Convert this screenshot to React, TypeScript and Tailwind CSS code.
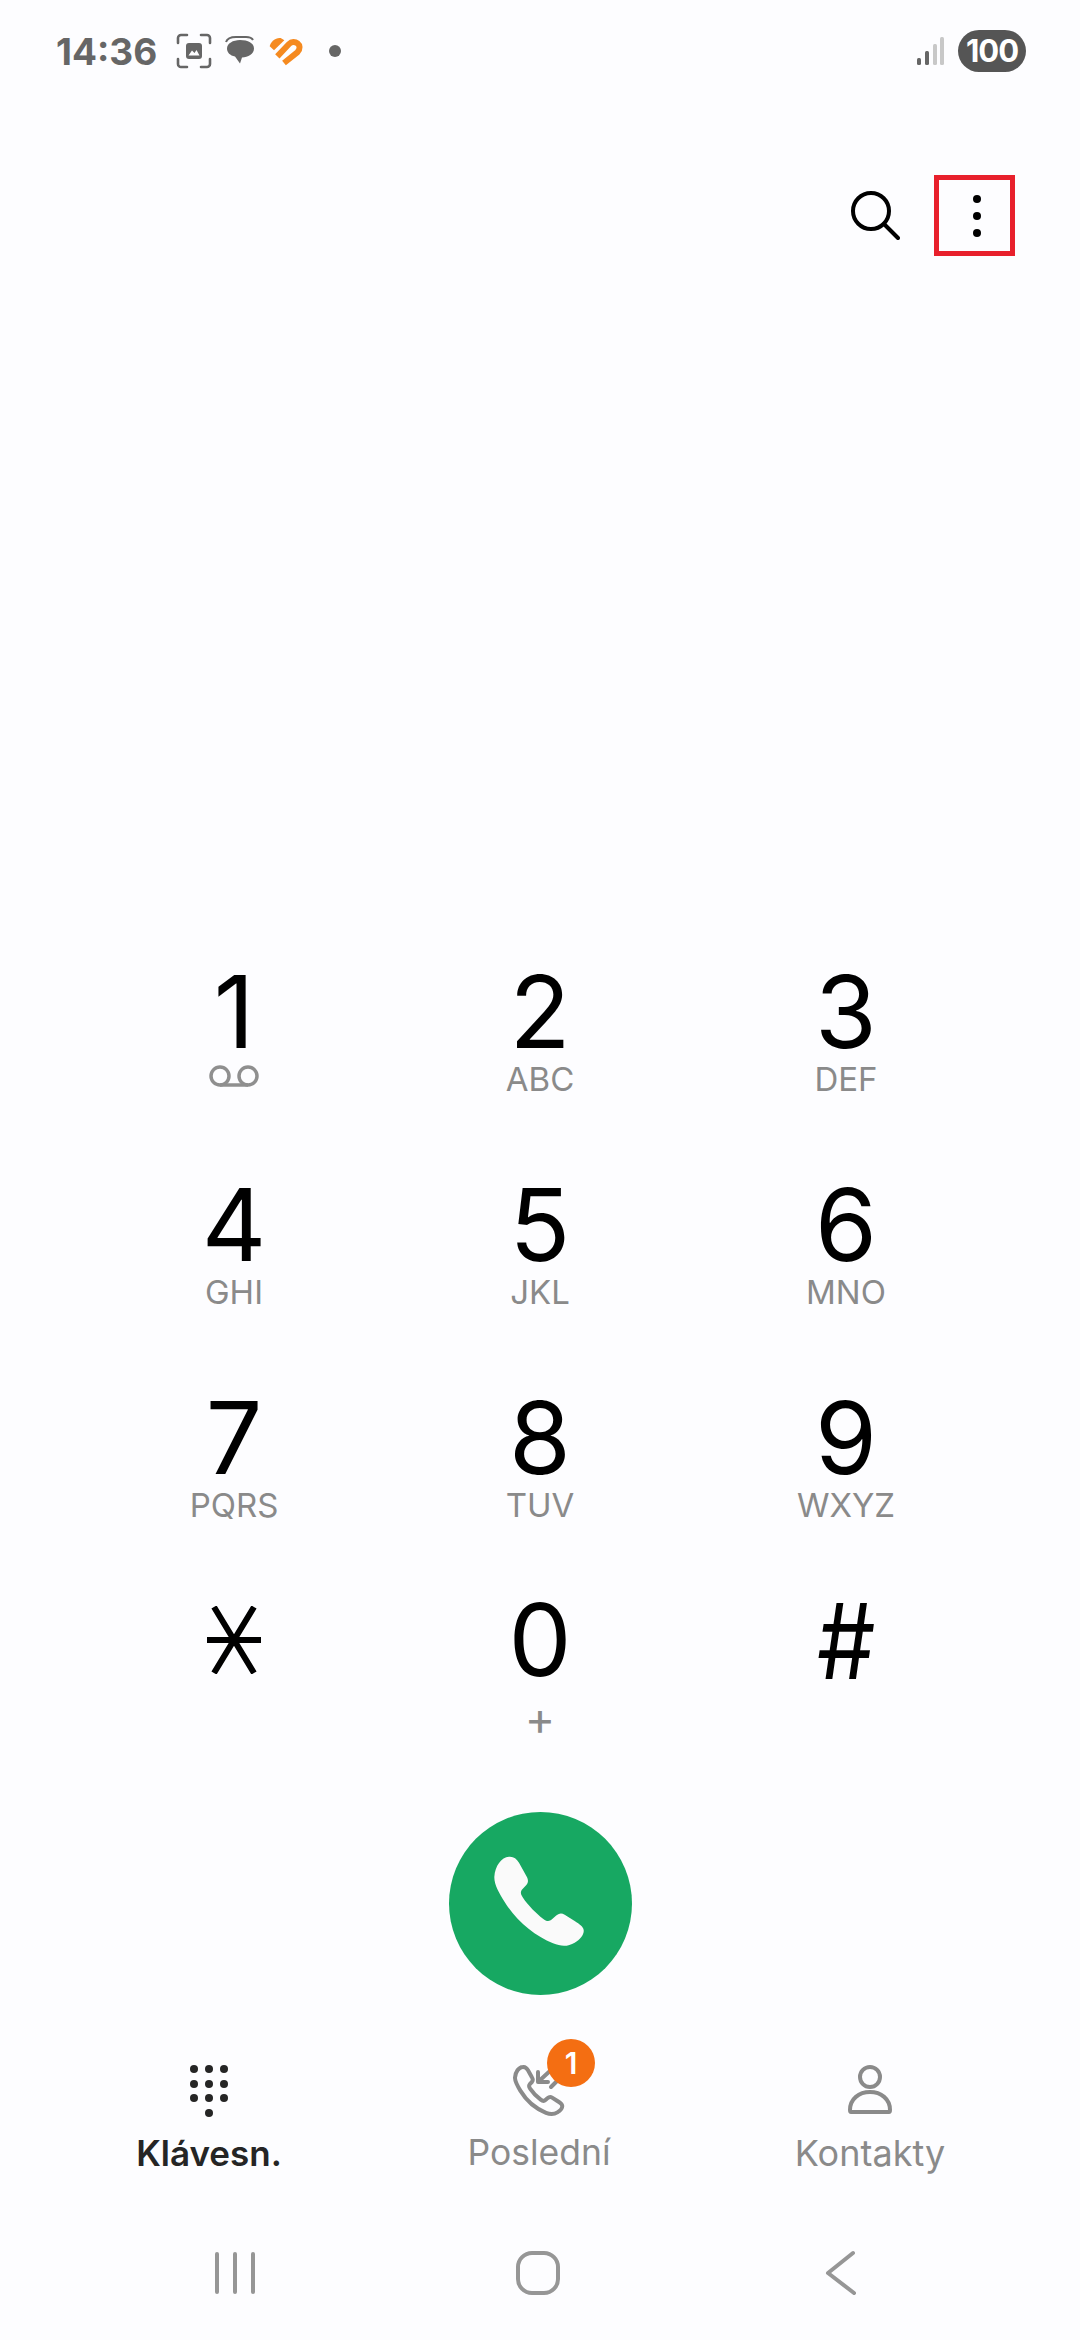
const keys = [
  { digit: '1', voicemail: true },
  { digit: '2', letters: 'ABC' },
  { digit: '3', letters: 'DEF' },
  { digit: '4', letters: 'GHI' },
  { digit: '5', letters: 'JKL' },
  { digit: '6', letters: 'MNO' },
  { digit: '7', letters: 'PQRS' },
  { digit: '8', letters: 'TUV' },
  { digit: '9', letters: 'WXYZ' },
];

function StatusBar() {
  return (
    <div className="flex items-center justify-between h-[102px] pl-[56px] pr-[54px]">
      <div className="flex items-center">
        <span className="text-[37px] leading-none font-bold text-[#666666] font-['Inter',sans-serif]">14:36</span>
        <svg className="ml-[19px]" width="36" height="36" viewBox="0 0 36 36" fill="none">
          <path d="M2 10V5a3 3 0 0 1 3-3h6M25 2h6a3 3 0 0 1 3 3v5M34 26v5a3 3 0 0 1-3 3h-6M11 34H5a3 3 0 0 1-3-3v-5" stroke="#666" strokeWidth="2.6" strokeLinecap="round" />
          <rect x="10" y="10" width="16" height="16" rx="3" fill="#666" />
          <path d="M12.500 22.500l3.500-5 2.500 2.500 2-3 3 5.500z" fill="#fdfdff" />
        </svg>
        <svg className="ml-[12px]" width="32" height="32" viewBox="0 0 32 32">
          <path d="M2 7c1-3 5-5 10-5h10c3 0 6 1 7 3" fill="none" stroke="#666" strokeWidth="2" />
          <path d="M16 5c8 0 14 3 14 8.500s-6 9-12 9l-2 6-5-7c-5-1-8-4-8-8 0-5 6-8.500 13-8.500z" fill="#666" />
        </svg>
        <svg className="ml-[13px]" width="35" height="29" viewBox="810 112 105 87" fill="none">
          <path d="M812 140C815 125 830 113 845 115L856 122L825 152Z" fill="#f58a20" />
          <path d="M835 170L870 133C885 118 915 135 895 158L855 190" stroke="#f58a20" strokeWidth="18" />
        </svg>
        <div className="ml-[25px] w-[12px] h-[12px] rounded-full bg-[#666666]" />
      </div>
      <div className="flex items-center">
        <svg width="28" height="30" viewBox="0 0 28 30">
          <rect x="1" y="22" width="4" height="7" rx="1.500" fill="#666" />
          <rect x="9" y="15" width="4" height="14" rx="1.500" fill="#666" />
          <rect x="17" y="8" width="4" height="21" rx="1.500" fill="#c8c8c8" />
          <rect x="24" y="1" width="4" height="28" rx="1.500" fill="#c8c8c8" />
        </svg>
        <div className="ml-[14px] w-[68px] h-[42px] rounded-full bg-[#555555] flex items-center justify-center text-white text-[31px] font-bold font-['Inter',sans-serif] tracking-[-1px]">
          100
        </div>
      </div>
    </div>
  );
}

function Toolbar() {
  return (
    <div className="flex items-center justify-end pr-[65px] mt-[73px]">
      <svg width="50" height="52" viewBox="0 0 50 52" fill="none" stroke="#000" strokeWidth="4" strokeLinecap="round">
        <circle cx="21" cy="21" r="18" />
        <path d="M34 34l14 14" />
      </svg>
      <div className="ml-[34px] w-[81px] h-[81px] border-[5px] border-[#e8202c] flex flex-col items-center justify-center gap-[9px] pl-[4px]">
        <div className="w-[8px] h-[8px] rounded-full bg-black" />
        <div className="w-[8px] h-[8px] rounded-full bg-black" />
        <div className="w-[8px] h-[8px] rounded-full bg-black" />
      </div>
    </div>
  );
}

function Key({ digit, letters, voicemail }: { digit: string; letters?: string; voicemail?: boolean }) {
  return (
    <div className="flex flex-col items-center h-[213px]">
      <div className="h-[100px] flex items-center justify-center text-[100px] leading-none font-normal text-black font-['Inter',sans-serif]">
        {digit}
      </div>
      {voicemail ? (
        <svg className="mt-[3px]" width="50" height="24" viewBox="0 0 50 24" fill="none" stroke="#8f8f8f" strokeWidth="3.500">
          <circle cx="11" cy="11" r="9" />
          <circle cx="39" cy="11" r="9" />
          <path d="M11 20h28" />
        </svg>
      ) : (
        <div className="text-[33px] leading-[40px] -mt-[3px] text-[#8a8a8a] font-['Inter',sans-serif]">{letters}</div>
      )}
    </div>
  );
}

function KeyPad() {
  return (
    <div className="grid grid-cols-3 px-[81px] mt-[706px]">
      {keys.map(k => (
        <Key key={k.digit} {...k} />
      ))}
      <div className="flex justify-center h-[148px] -mt-[11px] pt-[16px]">
        <svg width="54" height="68" viewBox="0 0 54 68" fill="none" stroke="#000" strokeWidth="6">
          <path d="M7 1l40 66M47 1L7 67M0 34h54" />
        </svg>
      </div>
      <div className="flex flex-col items-center h-[148px] -mt-[11px]">
        <div className="h-[100px] flex items-center text-[100px] leading-none font-normal text-black font-['Inter',sans-serif]">0</div>
        <div className="mt-[8px] text-[46px] leading-[40px] text-[#8a8a8a] font-['Inter',sans-serif]">+</div>
      </div>
      <div className="flex justify-center h-[148px] -mt-[11px]">
        <div className="h-[100px] flex items-center text-[105px] leading-none font-normal text-black font-['Inter',sans-serif] scale-x-[0.88]">#</div>
      </div>
    </div>
  );
}

function CallButton() {
  return (
    <div className="flex justify-center mt-[74px]">
      <div className="w-[183px] h-[183px] rounded-full bg-[#17a862] flex items-center justify-center">
        <svg width="90" height="91" viewBox="223 200 270 273" className="-ml-[2px] -mt-[4px]">
          <path
            d="M268 202C245 203 226 230 224 262C223 285 238 310 255 338C290 395 345 440 400 462C425 472 445 472 465 460C482 450 494 435 492 422C491 412 480 405 465 395L435 376C425 370 417 372 408 380L397 390C388 398 380 396 370 388C350 372 325 348 310 325C303 315 301 308 308 300L320 287C327 279 326 270 320 260L298 220C290 207 282 201 268 202Z"
            fill="#fafafa"
          />
        </svg>
      </div>
    </div>
  );
}

function TabBar() {
  return (
    <div className="grid grid-cols-[repeat(3,330px)] mt-[67px] pl-[44px]">
      <div className="flex flex-col items-center">
        <div className="h-[69px] grid grid-cols-3 gap-x-[7px] gap-y-[6.500px] content-start pt-[3px]">
          {Array.from({ length: 10 }, (_, i) => (
            <div key={i} className={`w-[8px] h-[8px] rounded-full bg-[#252525] ${i === 9 ? 'col-start-2' : ''}`} />
          ))}
        </div>
        <span className="text-[35px] leading-[44px] font-semibold text-[#252525] font-['Inter',sans-serif]">Klávesn.</span>
      </div>
      <div className="flex flex-col items-center">
        <div className="relative h-[69px]">
          <svg className="mt-[3px]" width="52" height="52" viewBox="0 0 52 52" fill="none" stroke="#8a8a8a" strokeWidth="4" strokeLinecap="round" strokeLinejoin="round">
            <path d="M9.700 2C5.700 2.200 2.400 7 2 12.600C1.800 16.600 4.500 21 7.500 25.900C13.600 36 23.300 43.900 33 47.800C37.400 49.500 40.900 49.500 44.400 47.400C47.400 45.600 49.500 43 49.200 40.700C49 38.900 47 37.700 44.400 36L39.100 32.600C37.400 31.600 36 31.900 34.400 33.300L32.400 35.100C30.900 36.500 29.500 36.100 27.700 34.700C24.200 31.900 19.800 27.700 17.100 23.600C15.900 21.900 15.600 20.700 16.800 19.200L18.900 17C20.100 15.600 20 14 18.900 12.200L15 5.200C13.600 2.900 12.200 1.800 9.700 2Z" />
            <path d="M38 5L25 17M25 7v10h10M38 22l8-8" />
          </svg>
          <div className="absolute -top-[23px] left-[34px] w-[48px] h-[48px] rounded-full bg-[#f46e12] flex items-center justify-center text-white text-[30px] font-semibold font-['Inter',sans-serif]">
            1
          </div>
        </div>
        <span className="text-[35.500px] leading-[44px] text-[#8a8a8a] font-['Inter',sans-serif]">Poslední</span>
      </div>
      <div className="flex flex-col items-center pl-[2px]">
        <div className="h-[69px]">
          <svg className="mt-[3px]" width="44" height="50" viewBox="0 0 44 50" fill="none" stroke="#8a8a8a" strokeWidth="4" strokeLinejoin="round">
            <circle cx="22" cy="12" r="10" />
            <path d="M3 47c-1 0-1-1-1-2 0-11 9-18 20-18s20 7 20 18c0 1 0 2-1 2z" />
          </svg>
        </div>
        <span className="text-[36px] leading-[44px] text-[#8a8a8a] font-['Inter',sans-serif]">Kontakty</span>
      </div>
    </div>
  );
}

function NavBar() {
  return (
    <div className="grid grid-cols-[repeat(3,303px)] items-center mt-[75px] pl-[83px]">
      <div className="flex justify-center gap-[14px]">
        <div className="w-[4px] h-[42px] rounded-full bg-[#969696]" />
        <div className="w-[4px] h-[42px] rounded-full bg-[#969696]" />
        <div className="w-[4px] h-[42px] rounded-full bg-[#969696]" />
      </div>
      <div className="flex justify-center">
        <div className="w-[44px] h-[44px] rounded-[16px] border-[4px] border-[#969696]" />
      </div>
      <div className="flex justify-center">
        <svg width="32" height="46" viewBox="0 0 32 46" fill="none" stroke="#969696" strokeWidth="4" strokeLinecap="round" strokeLinejoin="round">
          <path d="M28 3L3 23l26 20" />
        </svg>
      </div>
    </div>
  );
}

export default function App() {
  return (
    <div className="w-[1080px] h-[2340px] bg-[#fdfdff] overflow-hidden">
      <StatusBar />
      <Toolbar />
      <KeyPad />
      <CallButton />
      <TabBar />
      <NavBar />
    </div>
  );
}
